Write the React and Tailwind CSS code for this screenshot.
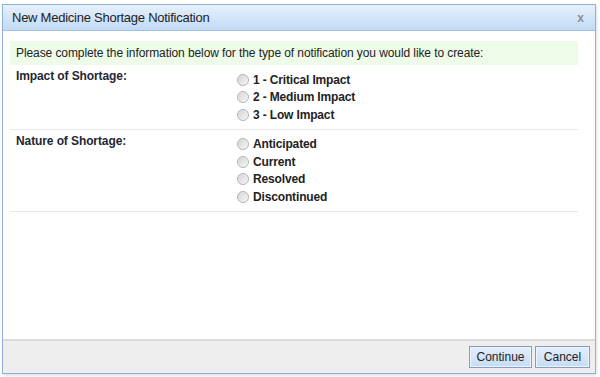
import React from "react";

const impact = ["1 - Critical Impact", "2 - Medium Impact", "3 - Low Impact"];
const nature = ["Anticipated", "Current", "Resolved", "Discontinued"];

const Radio = ({ label }) => (
  <label className="flex items-center h-[17.5px] gap-[4px] cursor-pointer">
    <span className="w-[12px] h-[12px] rounded-full border border-[#b3b3b3] bg-gradient-to-br from-[#d4d4d4] to-[#f7f7f7] shadow-[inset_0_0_1px_#fff]" />
    <span className="font-bold text-[12px] tracking-[-0.15px] text-[#222]">{label}</span>
  </label>
);

const Section = ({ title, options }) => (
  <div className="grid grid-cols-[227px_1fr] border-b border-[#e8e8e8] pb-[5px]">
    <div className="pl-[6px] pt-[4px] font-bold text-[12px] tracking-[-0.1px] leading-[14px] text-[#1f2733]">
      {title}
    </div>
    <div className="pt-[6px]">
      {options.map((o) => (
        <Radio key={o} label={o} />
      ))}
    </div>
  </div>
);

const Button = ({ children, className }) => (
  <button
    className={`h-[22px] border border-[#7f9fc6] bg-gradient-to-b from-[#e3eefb] to-[#c6dcf4] shadow-[inset_0_0_0_1px_#eef5fd] text-[12px] text-[#222] ${className}`}
  >
    {children}
  </button>
);

export default function App() {
  return (
    <div className="w-[600px] h-[377px] bg-white pt-[4px] pl-[2px] font-['Liberation_Sans',Arial,sans-serif]">
      <div className="w-[594px] h-[370px] border border-[#8db1d9] flex flex-col bg-white shadow-[1px_2px_3px_rgba(0,0,0,0.12)]">
        {/* Title bar */}
        <div className="h-[26px] shrink-0 border-b border-[#9ebee2] bg-gradient-to-b from-[#e6f0fc] to-[#c2daf5] flex items-center justify-between pl-[9px] pr-[11px]">
          <span className="text-[13px] tracking-[-0.25px] text-[#222]">New Medicine Shortage Notification</span>
          <span className="text-[12px] font-bold text-[#8a8f96] leading-none">x</span>
        </div>

        {/* Body */}
        <div className="flex-1 pl-[7px] pr-[17px] pt-[10px]">
          <div className="h-[24px] bg-[#edfbe8] flex items-center pl-[6px] text-[12px] tracking-[-0.09px] text-[#222]">
            Please complete the information below for the type of notification you would like to create:
          </div>
          <Section title="Impact of Shortage:" options={impact} />
          <Section title="Nature of Shortage:" options={nature} />
        </div>

        {/* Footer */}
        <div className="h-[34px] shrink-0 border-t-2 border-[#dcdcdc] bg-[#eeeeee] flex items-center justify-end gap-[3px] pr-[5px]">
          <Button className="w-[63px]">Continue</Button>
          <Button className="w-[55px]">Cancel</Button>
        </div>
      </div>
    </div>
  );
}
